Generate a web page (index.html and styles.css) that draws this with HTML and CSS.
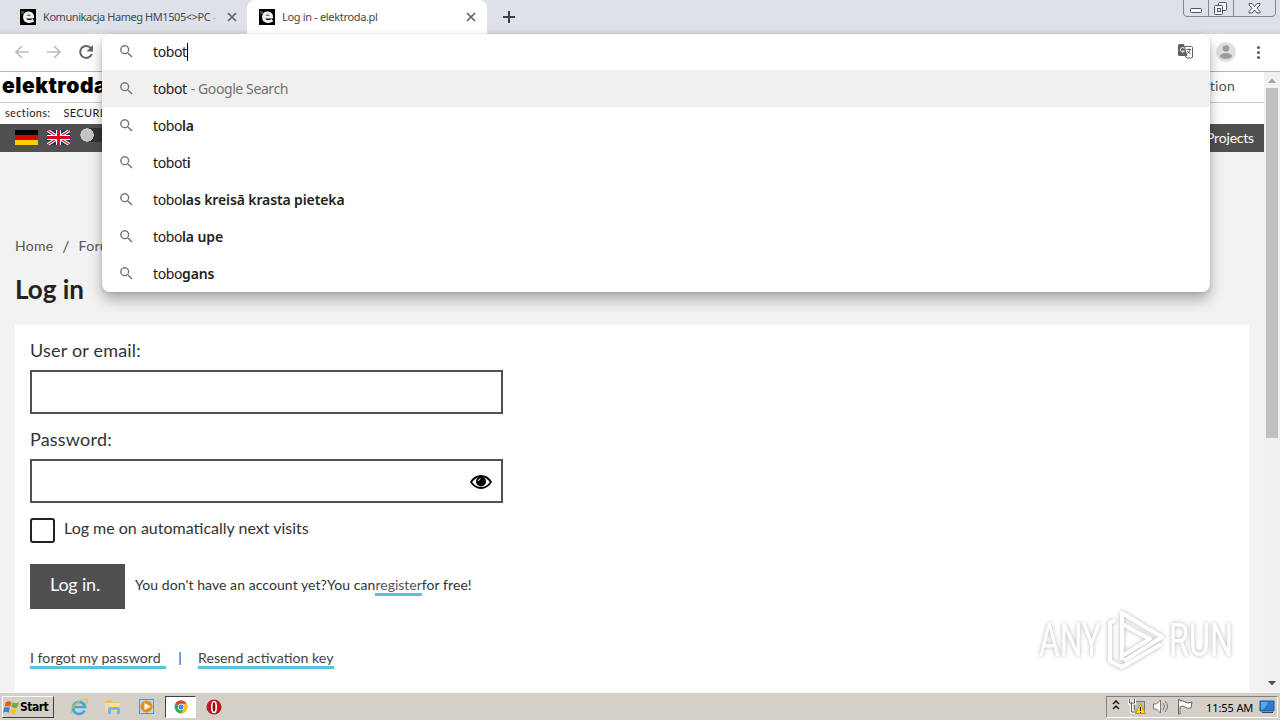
FILE: index.html
```html
<!DOCTYPE html>
<html lang="en">
<head>
    <meta charset="UTF-8">
    <title>Log in - elektroda.pl</title>
    <link rel="stylesheet" href="styles.css">
</head>
<body>
    <svg class="defs">
        <symbol id="search" viewBox="0 0 24 24"><path d="M15.5 14h-.8l-.3-.3A6.5 6.5 0 1 0 13.7 14.4l.3.3v.8l5 5 1.5-1.5zM9.500 14a4.500 4.500 0 1 1 0-9 4.500 4.500 0 0 1 0 9z"/></symbol>
        <symbol id="close" viewBox="0 0 10 10"><path d="M1 1l8 8M9 1l-8 8" stroke="#5f6368" stroke-width="1.700"/></symbol>
        <symbol id="favicon" viewBox="0 0 16 16">
            <rect width="16" height="16" fill="#000"/>
            <rect x="1" y="2" width="3" height="3" fill="#444"/>
            <path d="M13.500 11.300Q11 12.800 8.500 12.500Q4.500 12 4.500 8Q4.800 4 8.800 4Q12.800 4.300 12.500 8H5" fill="none" stroke="#eee" stroke-width="3"/>
        </symbol>
    </svg>

    <div class="tabs">
        <div class="tab">
            <svg class="favicon"><use href="#favicon"/></svg>
            <span class="tab-title first-title">Komunikacja Hameg HM1505&lt;&gt;PC <i>-</i></span>
            <svg class="close"><use href="#close"/></svg>
        </div>
        <div class="tab active">
            <svg class="favicon"><use href="#favicon"/></svg>
            <span class="tab-title second-title">Log in - elektroda.pl</span>
            <svg class="close"><use href="#close"/></svg>
        </div>
        <svg class="new-tab" viewBox="0 0 12 12"><path d="M6 0v12M0 6h12" stroke="#3c4043" stroke-width="2"/></svg>
        <svg class="window-buttons" viewBox="0 0 94 18">
            <path d="M.5 0V13Q.5 16.500 4 16.500H88Q92.500 16.500 92.500 13V0M25.500 0V16M50.500 0V16" fill="none" stroke="#828790"/>
            <g fill="#f4f5f7" stroke="#50555d">
                <rect x="7.500" y="8.500" width="11" height="4" rx="1"/>
                <rect x="35.500" y="2.500" width="8" height="8" rx="1"/>
                <rect x="31.500" y="5.500" width="8" height="9" rx="1"/>
                <rect x="34.500" y="8.500" width="3" height="3"/>
                <path d="M66 3.500h3l2.500 3 2.500-3h3v1.500l-3 3.200 3 3.300v1.500h-3l-2.500-3-2.500 3h-3v-1.500l3-3.300-3-3.200z"/>
            </g>
        </svg>
    </div>

    <div class="toolbar">
        <svg class="nav-icons" viewBox="0 0 100 38">
            <g fill="none" stroke="#babcbe" stroke-width="1.700">
                <path d="M29 18H16.500M22 12l-6 6 6 6"/>
                <path d="M47 18h12.500M54 12l6 6-6 6"/>
            </g>
            <path d="M91 14.300A6 6 0 1 0 91.800 20" fill="none" stroke="#5f6368" stroke-width="2"/>
            <path d="M93 11v6.500h-6.500z" fill="#5f6368"/>
        </svg>
        <svg class="user-icons" viewBox="0 0 60 38">
            <circle cx="16" cy="18" r="10" fill="#dedfe0"/>
            <circle cx="16" cy="14.500" r="3.300" fill="#9b9da0"/>
            <ellipse cx="16" cy="22" rx="6" ry="3" fill="#9b9da0"/>
            <g fill="#5f6368"><circle cx="48.500" cy="13.500" r="1.600"/><circle cx="48.500" cy="18.500" r="1.600"/><circle cx="48.500" cy="23.500" r="1.600"/></g>
        </svg>
    </div>

    <div class="viewport">
        <div class="page">
            <div class="top">
                <span class="logo">elektroda</span>
                <span class="registration">Registration</span>
            </div>
            <div class="sections"><span>sections:</span><span>SECURITY</span></div>
            <div class="dark-bar">
                <svg class="flag" viewBox="0 0 23 15"><path d="M0 0h23v5H0z"/><path fill="#d00" d="M0 5h23v5H0z"/><path fill="#ffce00" d="M0 10h23v5H0z"/></svg>
                <svg class="flag" viewBox="0 0 23 15">
                    <path fill="#20307c" d="M0 0h23v15H0z"/>
                    <path d="M0 0l23 15M23 0L0 15" stroke="#fff" stroke-width="3.200"/>
                    <path d="M0 0l23 15M23 0L0 15" stroke="#d22" stroke-width="1.200"/>
                    <path d="M11.500 0v15M0 7.500h23" stroke="#fff" stroke-width="5"/>
                    <path d="M11.500 0v15M0 7.500h23" stroke="#d8001c" stroke-width="2.800"/>
                </svg>
                <span class="switch"></span>
                <span class="projects">Projects</span>
            </div>
            <div class="breadcrumb"><span>Home</span><span class="slash">/</span><span>Forum</span></div>
            <h1>Log in</h1>
            <div class="card">
                <label class="user-label">User or email:</label>
                <div class="field"></div>
                <label class="password-label">Password:</label>
                <div class="field">
                    <svg class="eye" viewBox="0 0 22 14">
                        <path d="M1 7Q5 1 11 1t10 6Q17 13 11 13T1 7z" fill="none" stroke="#000" stroke-width="1.800"/>
                        <circle cx="11" cy="6.500" r="5"/>
                        <path d="M8.500 6Q8.500 4 10.500 3.800" fill="none" stroke="#fff"/>
                    </svg>
                </div>
                <div class="remember"><span class="checkbox"></span><span class="remember-text">Log me on automatically next visits</span></div>
                <div class="submit">
                    <div class="button">Log in.</div>
                    <div class="account">You don't have an account yet?You can<a>register</a>for free!</div>
                </div>
                <div class="links"><a class="forgot">I forgot my password</a><span class="separator">|</span><a class="resend">Resend activation key</a></div>
            </div>
        </div>
        <div class="scrollbar">
            <svg viewBox="0 0 16 16"><path d="M4 11l4-4.500 4 4.500z" fill="#a3a3a3"/></svg>
            <div class="thumb"></div>
            <svg class="down" viewBox="0 0 16 16"><path d="M4 5h8l-4 4.500z" fill="#505050"/></svg>
        </div>
    </div>

    <div class="omnibox">
        <div class="row input-row">
            <svg class="search"><use href="#search"/></svg><span class="typed">tobot</span><span class="caret"></span>
            <svg class="translate" viewBox="0 0 15 15">
                <path d="M0 1.500Q0 0 1.500 0H6l3.500 12H1.500Q0 12 0 10.500z" fill="#5f6368"/>
                <path d="M7 2.500h6.500q1 0 1 1v9.500q0 1-1 1H9L7 12" fill="none" stroke="#5f6368"/>
                <path d="M6.300 4.300a2.200 2.200 0 1 0 .2 2.700H4.500" fill="none" stroke="#fff"/>
                <path d="M8.500 5.500h4.500M11 4.500v1M12.300 5.500Q12 8 9.500 9.500M9.500 7l3 3" fill="none" stroke="#5f6368"/>
            </svg>
        </div>
        <div class="row selected"><svg class="search"><use href="#search"/></svg><span class="typed">tobot</span><span class="hint">- Google Search</span></div>
        <div class="row"><svg class="search"><use href="#search"/></svg><span>tobo</span><b>la</b></div>
        <div class="row"><svg class="search"><use href="#search"/></svg><span class="typed">tobot</span><b>i</b></div>
        <div class="row"><svg class="search"><use href="#search"/></svg><span>tobo</span><b>las kreisā krasta pieteka</b></div>
        <div class="row"><svg class="search"><use href="#search"/></svg><span>tobo</span><b>la upe</b></div>
        <div class="row"><svg class="search"><use href="#search"/></svg><span>tobo</span><b>gans</b></div>
    </div>

    <svg class="watermark" viewBox="0 0 224 70">
        <text x="4" y="51" textLength="62" lengthAdjust="spacingAndGlyphs">ANY</text>
        <g fill="none" stroke="#fff" stroke-width="4" stroke-linejoin="round">
            <path d="M80 15l-5 3v38l12 6 39-23"/>
            <path d="M87 55V8l40 24-38 24M87 19l28 15-28 17"/>
        </g>
        <text x="134" y="51" textLength="64" lengthAdjust="spacingAndGlyphs">RUN</text>
    </svg>

    <div class="taskbar">
        <div class="start">
            <svg viewBox="0 0 18 17">
                <path d="M3 3q3-2 6 0L7.500 8q-3-2-6 0z" fill="#e65a24"/>
                <path d="M10 3q3 2 7 0l-2 5.500q-3 1.500-6-.5z" fill="#70ad30"/>
                <path d="M1.200 9q3-2 6 0L6 14q-3-2-6 0z" fill="#3684d2"/>
                <path d="M8.500 9q3 2 6 .5L13 15q-3 1-6-1z" fill="#f6c32c"/>
            </svg>
            <span>Start</span>
        </div>
        <svg class="ie" viewBox="0 0 18 18">
            <path d="M14.500 12.500A6 6 0 1 1 15 9H4" fill="none" stroke="#41a7df" stroke-width="2.700"/>
            <path d="M2 15Q-1 11 7 5T17 2Q18 4 16 6" fill="none" stroke="#e6b644" stroke-width="1.200"/>
        </svg>
        <svg class="folder" viewBox="0 0 18 18">
            <path d="M1 3l2-1h4l1 2h7v4H1z" fill="#e8c35c"/><path d="M1 5h15v8H1z" fill="#f8df91"/>
            <path d="M4 16v-5q0-2 2-2h7q3 0 3 2v5h-3v-4H7v4z" fill="#74b9df"/>
        </svg>
        <svg class="player" viewBox="0 0 18 18"><rect x="1.500" y="1.500" width="14" height="14" fill="#b9dcf3" stroke="#5596c6"/><circle cx="8.500" cy="8.500" r="6" fill="#f28b17"/><path d="M6.500 5v7l6-3.500z" fill="#fff"/></svg>
        <div class="chrome-button">
            <svg viewBox="0 0 14 14">
                <circle cx="7" cy="7" r="6.500" fill="#35a852"/>
                <path d="M7 7L1.300 3.800A6.500 6.500 0 0 1 12.600 3.800H7z" fill="#e64234"/>
                <path d="M7 3.800h5.600A6.500 6.500 0 0 1 7 13.500L10 8z" fill="#fbc116"/>
                <circle cx="7" cy="7" r="3.200" fill="#fff"/><circle cx="7" cy="7" r="2.500" fill="#4285f4"/>
            </svg>
        </div>
        <svg class="opera" viewBox="0 0 16 16"><circle cx="8" cy="8" r="7.500" fill="#bd1721"/><ellipse cx="8" cy="8" rx="2.200" ry="5.500" fill="#8b0e16" stroke="#fff" stroke-width="1.600"/></svg>
        <div class="tray">
            <svg class="tray-icons" viewBox="0 0 88 20">
                <path d="M6 7l3-3 3 3M6 12l3-3 3 3" fill="none" stroke="#111" stroke-width="1.500"/>
                <rect x="27.500" y="4.500" width="10" height="9" fill="#b8bfc8" stroke="#777"/>
                <path d="M22.500 2v4h5V2M24.500 6v9H31" fill="none" stroke="#fff" stroke-width="3"/>
                <path d="M22.500 2v4h5V2M24.500 6v9H30" fill="none" stroke="#555"/>
                <path d="M33.500 6.500l5 10h-10z" fill="#ffdf18" stroke="#b39814"/><path d="M33.500 10v4m0 1v1" stroke="#222"/>
                <path d="M46.500 7h3l4-4v13l-4-4h-3z" fill="#fff" stroke="#777"/>
                <path d="M56 6q3 3 0 7M58 4q5 5 0 11" fill="none" stroke="#777"/>
                <path d="M71.500 17V2.500h1.500V4q3-1 5 1t7 0l-1 6q-4 1-6-1t-5 0v7z" fill="#fff" stroke="#666"/>
            </svg>
            <span class="clock">11:55 AM</span>
            <svg class="desktop" viewBox="0 0 16 14"><path d="M1 1h14v10H1z" fill="#287bd0" stroke="#18569e"/><path d="M2 2h7Q7 8 2 10z" fill="#5ba8e8"/><path d="M3 12h11v1H3z" fill="#304b67"/></svg>
        </div>
    </div>
</body>
</html>
```
FILE: styles.css
```css
* {
    box-sizing: border-box;
}
body {
    margin: 0;
    width: 1280px;
    height: 720px;
    overflow: hidden;
    position: relative;
    font-family: Lato, sans-serif;
    color: #333;
}
svg {
    display: block;
    flex: none;
}
.defs {
    position: absolute;
    width: 0;
    height: 0;
}
.tabs {
    height: 34px;
    display: flex;
    background: linear-gradient(#dee1e8 28px, #d3d5da);
    padding-left: 8px;
}
.tab {
    display: flex;
    align-items: center;
    width: 239px;
    padding: 0 10px 2px 12px;
    font: 11px "Noto Sans", sans-serif;
    color: #45484c;
    white-space: nowrap;
}
.tab.active {
    width: 240px;
    padding-right: 11px;
    background: #fff;
    border-radius: 8px 8px 0 0;
}
.favicon {
    width: 16px;
    height: 16px;
    margin: 2px 7px 0 0;
}
.tab-title {
    flex: 1;
    min-width: 0;
}
.first-title {
    letter-spacing: -0.43px;
}
.first-title i {
    font-style: normal;
    color: #a5a8ad;
}
.second-title {
    letter-spacing: -0.33px;
}
.close {
    width: 10px;
    height: 10px;
    margin-top: 2px;
}
.new-tab {
    width: 12px;
    height: 12px;
    margin: 11px 0 0 16px;
}
.window-buttons {
    width: 94px;
    height: 18px;
    margin-left: auto;
    margin-right: 3px;
}
.toolbar {
    height: 38px;
    display: flex;
    justify-content: space-between;
    border-bottom: 1px solid #b4b4b4;
    background: #fff;
}
.nav-icons {
    width: 100px;
    height: 38px;
}
.user-icons {
    width: 60px;
    height: 38px;
    margin-right: 10px;
}
.viewport {
    height: 620px;
    display: flex;
    background: #f2f2f2;
}
.page {
    width: 1264px;
    height: 620px;
    overflow: hidden;
}
.top {
    height: 31px;
    padding: 0 29px 0 2px;
    display: flex;
    justify-content: space-between;
    background: #fff;
    border-bottom: 1px solid #ccc;
    line-height: 28px;
}
.logo {
    font: 900 21px/28px Inter, sans-serif;
    letter-spacing: 0.5px;
    color: #000;
}
.registration {
    font-size: 14px;
    letter-spacing: 0.3px;
    color: #555;
}
.sections {
    height: 21px;
    display: flex;
    gap: 13px;
    padding-left: 5px;
    font-size: 11px;
    line-height: 20px;
    letter-spacing: 0.35px;
    background: #fff;
    color: #222;
}
.dark-bar {
    height: 28px;
    display: flex;
    align-items: center;
    padding: 0 10px 2px 15px;
    background: #505050;
}
.flag {
    width: 23px;
    height: 15px;
    margin-right: 9px;
}
.switch {
    width: 28px;
    height: 14px;
    border-radius: 8px;
    background: radial-gradient(circle at 7px 7px, #c4c4c4 6.5px, #333 7px);
    margin-top: -4px;
    margin-left: 1px;
}
.projects {
    margin-left: auto;
    color: #fff;
    font-size: 14px;
    letter-spacing: -0.2px;
}
.breadcrumb {
    display: flex;
    margin: 84px 0 0 15px;
    height: 20px;
    line-height: 20px;
    font-size: 14px;
    letter-spacing: 0.3px;
    color: #555;
}
.slash {
    width: 25px;
    text-align: center;
    font-size: 16px;
}
h1 {
    margin: 15px 0 0 15px;
    height: 37px;
    font-size: 26px;
    line-height: 36px;
    color: #222;
}
.card {
    margin: 17px 15px 0;
    height: 367px;
    padding: 13px 15px 0;
    background: #fff;
}
.card label {
    display: block;
    height: 26px;
    font-size: 18px;
    line-height: 24px;
    letter-spacing: 0.2px;
}
.field {
    width: 473px;
    height: 44px;
    margin-top: 6px;
    border: 2px solid #505050;
    display: flex;
    align-items: center;
    justify-content: flex-end;
    padding-right: 9px;
}
.card .password-label {
    margin-top: 13px;
}
.eye {
    width: 22px;
    height: 14px;
    margin-top: 2px;
}
.remember {
    display: flex;
    margin-top: 15px;
    height: 25px;
}
.checkbox {
    width: 25px;
    height: 25px;
    border: 2px solid #222;
    border-radius: 3px;
    margin-right: 9px;
}
.remember-text {
    font-size: 16px;
    line-height: 20px;
}
.submit {
    display: flex;
    margin-top: 21px;
    font-size: 14px;
}
.button {
    width: 95px;
    height: 45px;
    padding-left: 20px;
    margin-right: 10px;
    background: #505050;
    color: #fff;
    font-size: 18px;
    line-height: 41px;
    letter-spacing: -0.2px;
}
.account {
    line-height: 42px;
    letter-spacing: 0.07px;
    white-space: nowrap;
}
.account a {
    display: inline-block;
    line-height: 17px;
    letter-spacing: 0;
    border-bottom: 3px solid #54c5d5;
    color: #555;
}
.links {
    display: flex;
    margin-top: 41px;
    font-size: 14.200px;
    line-height: 16px;
    color: #444;
}
.links a {
    height: 19px;
    border-bottom: 3px solid #54c5d5;
}
.forgot {
    width: 136px;
}
.resend {
    width: 136px;
    white-space: nowrap;
}
.separator {
    width: 32px;
    padding-right: 4px;
    text-align: center;
}
.scrollbar {
    width: 16px;
    display: flex;
    flex-direction: column;
    background: #f1f1f1;
}
.scrollbar svg {
    width: 16px;
    height: 16px;
}
.thumb {
    width: 12px;
    height: 350px;
    margin-left: 2px;
    background: #c1c1c1;
}
.scrollbar .down {
    margin-top: auto;
}
.omnibox {
    position: absolute;
    left: 102px;
    top: 34px;
    width: 1108px;
    height: 258px;
    background: #fff;
    border-radius: 8px;
    box-shadow: 0 8px 14px rgba(0, 0, 0, 0.28), 0 1px 4px rgba(0, 0, 0, 0.12);
    font: 14px "Noto Sans", sans-serif;
    color: #222;
}
.row {
    height: 37px;
    display: flex;
    align-items: center;
    padding: 0 17px 1px 16px;
    white-space: pre;
    letter-spacing: -0.4px;
}
.row b {
    font-weight: 600;
    letter-spacing: -0.12px;
}
.input-row {
    height: 36px;
}
.selected {
    background: #f0f0f0;
}
.search {
    width: 17px;
    height: 17px;
    fill: #757575;
    margin-right: 18px;
}
.caret {
    width: 1px;
    height: 18px;
    background: #000;
}
.translate {
    width: 15px;
    height: 15px;
    margin-left: auto;
}
.hint {
    margin-left: 4px;
    color: #707070;
}
.watermark {
    position: absolute;
    left: 1035px;
    top: 605px;
    width: 224px;
    height: 70px;
    filter: drop-shadow(0 0 2px rgba(0, 0, 0, 0.35));
    opacity: 0.85;
}
.watermark text {
    font: 46px "Roboto", sans-serif;
    fill: #fff;
}
.taskbar {
    height: 28px;
    display: flex;
    align-items: center;
    padding: 1px 2px 0;
    background: #d4d0c8;
    border-top: 1px solid #fff;
}
.start {
    width: 52px;
    height: 22px;
    display: flex;
    align-items: center;
    border: 1px solid;
    border-color: #fff #404040 #404040 #fff;
    font: bold 12px "DejaVu Sans Condensed", sans-serif;
    color: #000;
}
.start svg {
    width: 17px;
    height: 17px;
}
.start span {
    letter-spacing: -0.5px;
}
.ie,
.folder,
.player {
    width: 18px;
    height: 18px;
}
.ie {
    margin-left: 16px;
}
.folder {
    margin-left: 16px;
}
.player {
    margin-left: 16px;
}
.chrome-button {
    width: 31px;
    height: 22px;
    margin-left: 9px;
    border: 1px solid;
    border-color: #404040 #fff #fff #404040;
    background: #fff;
    display: flex;
    align-items: center;
    justify-content: center;
}
.chrome-button svg {
    width: 14px;
    height: 14px;
}
.opera {
    width: 16px;
    height: 16px;
    margin-left: 10px;
}
.tray {
    width: 172px;
    height: 22px;
    margin-left: auto;
    display: flex;
    align-items: center;
    border: 1px solid;
    border-color: #808080 #fff #fff #808080;
}
.tray-icons {
    width: 88px;
    height: 20px;
}
.clock {
    width: 53px;
    margin-left: 11px;
    font: 11px "Noto Sans", sans-serif;
    color: #000;
    letter-spacing: -0.1px;
    white-space: nowrap;
}
.desktop {
    width: 16px;
    height: 14px;
}
```
